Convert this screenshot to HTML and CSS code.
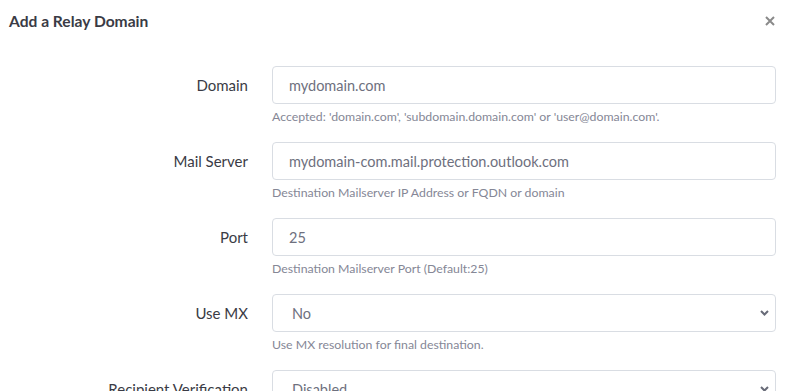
FILE: index.html
```html
<!DOCTYPE html>
<html lang="en">
<head>
  <meta charset="UTF-8">
  <meta name="viewport" content="width=device-width, initial-scale=1.0">
  <title>Add a Relay Domain</title>
  <link rel="stylesheet" href="styles.css">
</head>
<body>
  <div class="modal">
    <div class="modal-header">
      <h5 class="modal-title">Add a Relay Domain</h5>
      <button class="close" type="button" aria-label="Close">
        <svg width="10" height="10" viewBox="0 0 10 10"><path d="M1 1l8 8M9 1l-8 8" stroke="#8a8a8a" stroke-width="2"/></svg>
      </button>
    </div>

    <form class="modal-body">
      <div class="form-row">
        <label for="domain">Domain</label>
        <div class="field">
          <input type="text" id="domain" value="mydomain.com">
          <small class="help">Accepted: 'domain.com', 'subdomain.domain.com' or 'user@domain.com'.</small>
        </div>
      </div>
      <div class="form-row">
        <label for="server">Mail Server</label>
        <div class="field">
          <input type="text" id="server" value="mydomain-com.mail.protection.outlook.com">
          <small class="help">Destination Mailserver IP Address or FQDN or domain</small>
        </div>
      </div>
      <div class="form-row">
        <label for="port">Port</label>
        <div class="field">
          <input type="text" id="port" value="25">
          <small class="help">Destination Mailserver Port (Default:25)</small>
        </div>
      </div>
      <div class="form-row">
        <label for="usemx">Use MX</label>
        <div class="field">
          <select id="usemx">
            <option>No</option>
            <option>Yes</option>
          </select>
          <small class="help">Use MX resolution for final destination.</small>
        </div>
      </div>
      <div class="form-row">
        <label for="verify">Recipient Verification</label>
        <div class="field">
          <select id="verify">
            <option>Disabled</option>
            <option>Enabled</option>
          </select>
        </div>
      </div>
    </form>
  </div>
</body>
</html>
```

FILE: styles.css
```css
body {
  margin: 0;
  font-family: Lato, "Open Sans", sans-serif;
  background: #fff;
  color: #3a3b45;
  overflow: hidden;
}

.modal {
  width: 785px;
}

.modal-header {
  display: flex;
  align-items: center;
  justify-content: space-between;
  height: 42px;
  padding: 0 10px 0 9px;
}

.modal-title {
  margin: 0;
  font-size: 15.6px;
  font-weight: 700;
  color: #3a3b45;
}

.close {
  display: flex;
  border: none;
  background: none;
  padding: 0;
  cursor: pointer;
}

.modal-body {
  padding: 24px 9px 0 0;
}

.form-row {
  display: grid;
  grid-template-columns: 248px 1fr;
  column-gap: 24px;
  margin-bottom: 18px;
}

label {
  text-align: right;
  font-size: 15px;
  padding-top: 9px;
  line-height: 20px;
}

input, select {
  display: block;
  width: 100%;
  box-sizing: border-box;
  height: 38px;
  padding: 0 16px;
  font-family: inherit;
  font-size: 14.5px;
  color: #6e707e;
  background: #fff;
  border: 1px solid #d9dde3;
  border-radius: 4px;
  outline: none;
}

select {
  appearance: none;
  padding-left: 19px;
  background-image: url("data:image/svg+xml,%3Csvg xmlns='http://www.w3.org/2000/svg' width='9' height='6' viewBox='0 0 9 6'%3E%3Cpath d='M1 1l3.5 3.5L8 1' fill='none' stroke='%23686b78' stroke-width='2'/%3E%3C/svg%3E");
  background-repeat: no-repeat;
  background-position: right 6px center;
}

.help {
  display: block;
  margin-top: 6px;
  font-size: 12.3px;
  line-height: 14px;
  color: #858796;
}
```
